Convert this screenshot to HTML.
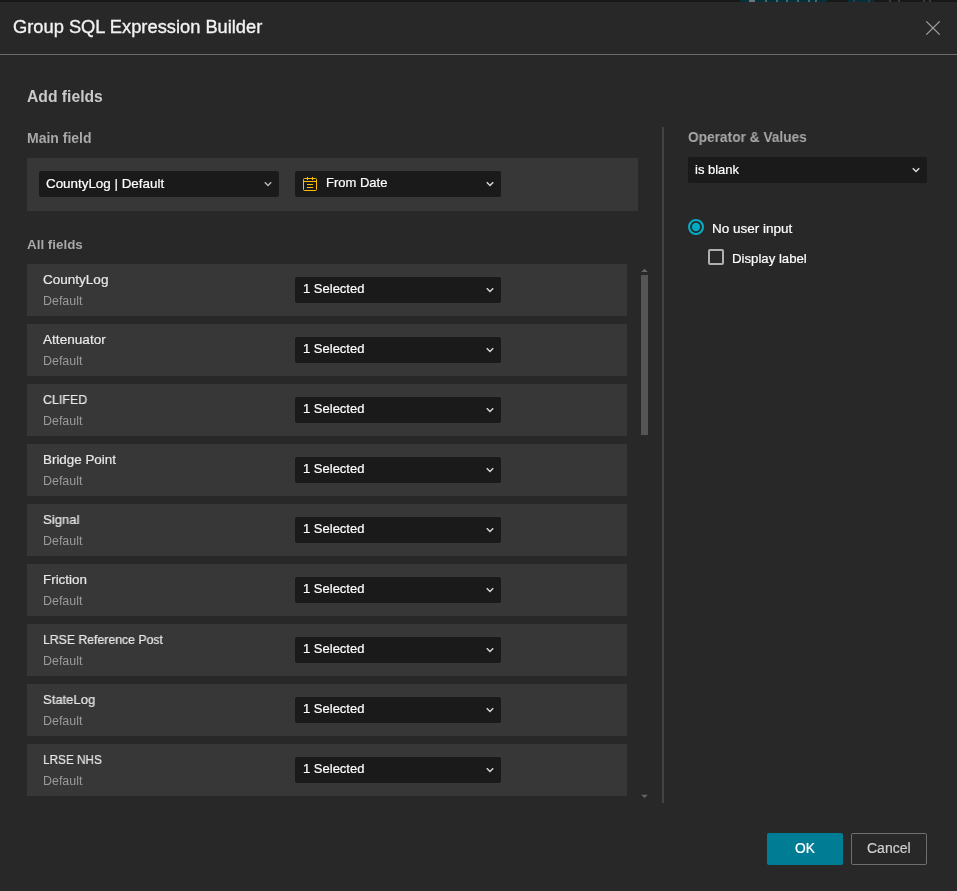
<!DOCTYPE html>
<html><head><meta charset="utf-8"><style>
html,body{margin:0;padding:0;}
body{width:957px;height:891px;background:#282828;position:relative;overflow:hidden;font-family:"Liberation Sans", sans-serif;}
body>div,body>svg{position:absolute;}
.t{white-space:nowrap;will-change:transform;}
.w{-webkit-text-stroke:0.2px currentColor;}
</style></head><body>
<div style="left:0px;top:0px;width:957px;height:2px;background:#181818;"></div>
<div style="left:740px;top:0px;width:87px;height:2px;background:#05303a;"></div>
<div style="left:848px;top:0px;width:26px;height:2px;background:#05303a;"></div>
<div style="left:749px;top:0px;width:6px;height:2px;background:#6a7a7c;"></div>
<div style="left:765px;top:0px;width:2px;height:2px;background:#4d6669;"></div>
<div style="left:776px;top:0px;width:2px;height:2px;background:#4d6669;"></div>
<div style="left:786px;top:0px;width:2px;height:2px;background:#4d6669;"></div>
<div style="left:797px;top:0px;width:2px;height:2px;background:#4d6669;"></div>
<div style="left:808px;top:0px;width:2px;height:2px;background:#4d6669;"></div>
<div style="left:815px;top:0px;width:2px;height:2px;background:#4d6669;"></div>
<div style="left:853px;top:0px;width:2px;height:2px;background:#3a3a3a;"></div>
<div style="left:868px;top:0px;width:2px;height:2px;background:#3a3a3a;"></div>
<div style="left:889px;top:0px;width:2px;height:2px;background:#3a3a3a;"></div>
<div style="left:898px;top:0px;width:2px;height:2px;background:#3a3a3a;"></div>
<div style="left:923px;top:0px;width:2px;height:2px;background:#3a3a3a;"></div>
<div style="left:929px;top:0px;width:2px;height:2px;background:#3a3a3a;"></div>
<div class="t" style="left:13px;top:17.51px;font-size:18.3px;line-height:18.3px;color:#f2f2f2;font-weight:400;-webkit-text-stroke:0.35px #f2f2f2">Group SQL Expression Builder</div>
<svg style="left:924px;top:19px" width="18" height="18" viewBox="0 0 18 18"><path d="M2.3 2.3 L15.7 15.7 M15.7 2.3 L2.3 15.7" stroke="#a6a6a6" stroke-width="1.2" fill="none"/></svg>
<div style="left:0px;top:54px;width:957px;height:1px;background:#6b6b6b;"></div>
<div class="t" style="left:27px;top:89.01px;font-size:15.7px;line-height:15.7px;color:#c8c8c8;font-weight:700;">Add fields</div>
<div class="t" style="left:27px;top:130.65px;font-size:14px;line-height:14px;color:#a8a8a8;font-weight:700;">Main field</div>
<div style="left:27px;top:158px;width:611px;height:53px;background:#373737;"></div>
<div style="left:39px;top:171px;width:240px;height:26px;background:#1a1a1a;border-radius:2px"></div>
<div class="t w" style="left:46px;top:176.86px;font-size:13.4px;line-height:13.4px;color:#ffffff;font-weight:400;">CountyLog | Default</div>
<svg style="left:263px;top:179px" width="10" height="10" viewBox="0 0 10 10"><polyline points="1.8,3.3 5,6.5 8.2,3.3" fill="none" stroke="#b8b8b8" stroke-width="1.5"/></svg>
<div style="left:295px;top:171px;width:206px;height:26px;background:#1a1a1a;border-radius:2px"></div>
<svg style="left:302px;top:176px" width="16" height="16" viewBox="0 0 16 16" fill="none" stroke="#ffbf00" stroke-width="1"><rect x="1.5" y="2.5" width="13" height="12" rx="1"/><line x1="1.5" y1="5.5" x2="14.5" y2="5.5"/><line x1="5.5" y1="1" x2="5.5" y2="4"/><line x1="10.5" y1="1" x2="10.5" y2="4"/><line x1="5" y1="8.5" x2="11" y2="8.5"/><line x1="5" y1="11.5" x2="11" y2="11.5"/></svg>
<div class="t w" style="left:325.6px;top:176.20px;font-size:13px;line-height:13px;color:#ffffff;font-weight:400;">From Date</div>
<svg style="left:485px;top:179px" width="10" height="10" viewBox="0 0 10 10"><polyline points="1.8,3.3 5,6.5 8.2,3.3" fill="none" stroke="#d8d8d8" stroke-width="1.5"/></svg>
<div class="t" style="left:27px;top:237.66px;font-size:13.4px;line-height:13.4px;color:#a8a8a8;font-weight:700;">All fields</div>
<div style="left:27px;top:264px;width:600px;height:52px;background:#373737;"></div>
<div class="t w" style="left:43px;top:272.96px;font-size:13.4px;line-height:13.4px;color:#e8e8e8;font-weight:400;transform:scaleX(1.01);transform-origin:0 0;">CountyLog</div>
<div class="t" style="left:42.6px;top:295.06px;font-size:12.45px;line-height:12.45px;color:#9a9a9a;font-weight:400;">Default</div>
<div style="left:295px;top:277px;width:206px;height:26px;background:#1a1a1a;border-radius:2px"></div>
<div class="t w" style="left:302.6px;top:282.20px;font-size:13px;line-height:13px;color:#ffffff;font-weight:400;">1 Selected</div>
<svg style="left:485px;top:284.5px" width="10" height="10" viewBox="0 0 10 10"><polyline points="1.8,3.3 5,6.5 8.2,3.3" fill="none" stroke="#d8d8d8" stroke-width="1.5"/></svg>
<div style="left:27px;top:324px;width:600px;height:52px;background:#373737;"></div>
<div class="t w" style="left:43px;top:332.96px;font-size:13.4px;line-height:13.4px;color:#e8e8e8;font-weight:400;transform:scaleX(1.016);transform-origin:0 0;">Attenuator</div>
<div class="t" style="left:42.6px;top:355.06px;font-size:12.45px;line-height:12.45px;color:#9a9a9a;font-weight:400;">Default</div>
<div style="left:295px;top:337px;width:206px;height:26px;background:#1a1a1a;border-radius:2px"></div>
<div class="t w" style="left:302.6px;top:342.20px;font-size:13px;line-height:13px;color:#ffffff;font-weight:400;">1 Selected</div>
<svg style="left:485px;top:344.5px" width="10" height="10" viewBox="0 0 10 10"><polyline points="1.8,3.3 5,6.5 8.2,3.3" fill="none" stroke="#d8d8d8" stroke-width="1.5"/></svg>
<div style="left:27px;top:384px;width:600px;height:52px;background:#373737;"></div>
<div class="t w" style="left:43px;top:392.96px;font-size:13.4px;line-height:13.4px;color:#e8e8e8;font-weight:400;transform:scaleX(0.928);transform-origin:0 0;">CLIFED</div>
<div class="t" style="left:42.6px;top:415.06px;font-size:12.45px;line-height:12.45px;color:#9a9a9a;font-weight:400;">Default</div>
<div style="left:295px;top:397px;width:206px;height:26px;background:#1a1a1a;border-radius:2px"></div>
<div class="t w" style="left:302.6px;top:402.20px;font-size:13px;line-height:13px;color:#ffffff;font-weight:400;">1 Selected</div>
<svg style="left:485px;top:404.5px" width="10" height="10" viewBox="0 0 10 10"><polyline points="1.8,3.3 5,6.5 8.2,3.3" fill="none" stroke="#d8d8d8" stroke-width="1.5"/></svg>
<div style="left:27px;top:444px;width:600px;height:52px;background:#373737;"></div>
<div class="t w" style="left:43px;top:452.96px;font-size:13.4px;line-height:13.4px;color:#e8e8e8;font-weight:400;transform:scaleX(1.0);transform-origin:0 0;">Bridge Point</div>
<div class="t" style="left:42.6px;top:475.06px;font-size:12.45px;line-height:12.45px;color:#9a9a9a;font-weight:400;">Default</div>
<div style="left:295px;top:457px;width:206px;height:26px;background:#1a1a1a;border-radius:2px"></div>
<div class="t w" style="left:302.6px;top:462.20px;font-size:13px;line-height:13px;color:#ffffff;font-weight:400;">1 Selected</div>
<svg style="left:485px;top:464.5px" width="10" height="10" viewBox="0 0 10 10"><polyline points="1.8,3.3 5,6.5 8.2,3.3" fill="none" stroke="#d8d8d8" stroke-width="1.5"/></svg>
<div style="left:27px;top:504px;width:600px;height:52px;background:#373737;"></div>
<div class="t w" style="left:43px;top:512.96px;font-size:13.4px;line-height:13.4px;color:#e8e8e8;font-weight:400;transform:scaleX(0.98);transform-origin:0 0;">Signal</div>
<div class="t" style="left:42.6px;top:535.06px;font-size:12.45px;line-height:12.45px;color:#9a9a9a;font-weight:400;">Default</div>
<div style="left:295px;top:517px;width:206px;height:26px;background:#1a1a1a;border-radius:2px"></div>
<div class="t w" style="left:302.6px;top:522.20px;font-size:13px;line-height:13px;color:#ffffff;font-weight:400;">1 Selected</div>
<svg style="left:485px;top:524.5px" width="10" height="10" viewBox="0 0 10 10"><polyline points="1.8,3.3 5,6.5 8.2,3.3" fill="none" stroke="#d8d8d8" stroke-width="1.5"/></svg>
<div style="left:27px;top:564px;width:600px;height:52px;background:#373737;"></div>
<div class="t w" style="left:43px;top:572.96px;font-size:13.4px;line-height:13.4px;color:#e8e8e8;font-weight:400;transform:scaleX(0.99);transform-origin:0 0;">Friction</div>
<div class="t" style="left:42.6px;top:595.06px;font-size:12.45px;line-height:12.45px;color:#9a9a9a;font-weight:400;">Default</div>
<div style="left:295px;top:577px;width:206px;height:26px;background:#1a1a1a;border-radius:2px"></div>
<div class="t w" style="left:302.6px;top:582.20px;font-size:13px;line-height:13px;color:#ffffff;font-weight:400;">1 Selected</div>
<svg style="left:485px;top:584.5px" width="10" height="10" viewBox="0 0 10 10"><polyline points="1.8,3.3 5,6.5 8.2,3.3" fill="none" stroke="#d8d8d8" stroke-width="1.5"/></svg>
<div style="left:27px;top:624px;width:600px;height:52px;background:#373737;"></div>
<div class="t w" style="left:43px;top:632.96px;font-size:13.4px;line-height:13.4px;color:#e8e8e8;font-weight:400;transform:scaleX(0.915);transform-origin:0 0;">LRSE Reference Post</div>
<div class="t" style="left:42.6px;top:655.06px;font-size:12.45px;line-height:12.45px;color:#9a9a9a;font-weight:400;">Default</div>
<div style="left:295px;top:637px;width:206px;height:26px;background:#1a1a1a;border-radius:2px"></div>
<div class="t w" style="left:302.6px;top:642.20px;font-size:13px;line-height:13px;color:#ffffff;font-weight:400;">1 Selected</div>
<svg style="left:485px;top:644.5px" width="10" height="10" viewBox="0 0 10 10"><polyline points="1.8,3.3 5,6.5 8.2,3.3" fill="none" stroke="#d8d8d8" stroke-width="1.5"/></svg>
<div style="left:27px;top:684px;width:600px;height:52px;background:#373737;"></div>
<div class="t w" style="left:43px;top:692.96px;font-size:13.4px;line-height:13.4px;color:#e8e8e8;font-weight:400;transform:scaleX(0.974);transform-origin:0 0;">StateLog</div>
<div class="t" style="left:42.6px;top:715.06px;font-size:12.45px;line-height:12.45px;color:#9a9a9a;font-weight:400;">Default</div>
<div style="left:295px;top:697px;width:206px;height:26px;background:#1a1a1a;border-radius:2px"></div>
<div class="t w" style="left:302.6px;top:702.20px;font-size:13px;line-height:13px;color:#ffffff;font-weight:400;">1 Selected</div>
<svg style="left:485px;top:704.5px" width="10" height="10" viewBox="0 0 10 10"><polyline points="1.8,3.3 5,6.5 8.2,3.3" fill="none" stroke="#d8d8d8" stroke-width="1.5"/></svg>
<div style="left:27px;top:744px;width:600px;height:52px;background:#373737;"></div>
<div class="t w" style="left:43px;top:752.96px;font-size:13.4px;line-height:13.4px;color:#e8e8e8;font-weight:400;transform:scaleX(0.88);transform-origin:0 0;">LRSE NHS</div>
<div class="t" style="left:42.6px;top:775.06px;font-size:12.45px;line-height:12.45px;color:#9a9a9a;font-weight:400;">Default</div>
<div style="left:295px;top:757px;width:206px;height:26px;background:#1a1a1a;border-radius:2px"></div>
<div class="t w" style="left:302.6px;top:762.20px;font-size:13px;line-height:13px;color:#ffffff;font-weight:400;">1 Selected</div>
<svg style="left:485px;top:764.5px" width="10" height="10" viewBox="0 0 10 10"><polyline points="1.8,3.3 5,6.5 8.2,3.3" fill="none" stroke="#d8d8d8" stroke-width="1.5"/></svg>
<svg style="left:640px;top:267px" width="10" height="7" viewBox="0 0 10 7"><polygon points="1.2,5 4.5,1.8 7.8,5" fill="#666666"/></svg>
<div style="left:641px;top:275px;width:7px;height:160px;background:#555555;"></div>
<svg style="left:640px;top:793px" width="10" height="7" viewBox="0 0 10 7"><polygon points="1.2,1.8 4.5,5 7.8,1.8" fill="#666666"/></svg>
<div style="left:662px;top:127px;width:2px;height:676px;background:#444444;"></div>
<div class="t" style="left:688px;top:129.81px;font-size:14.4px;line-height:14.4px;color:#a8a8a8;font-weight:700;transform:scaleX(0.952);transform-origin:0 0;">Operator &amp; Values</div>
<div style="left:688px;top:157px;width:239px;height:26px;background:#1a1a1a;border-radius:2px"></div>
<div class="t w" style="left:695px;top:163.20px;font-size:13px;line-height:13px;color:#ffffff;font-weight:400;">is blank</div>
<svg style="left:911px;top:165px" width="10" height="10" viewBox="0 0 10 10"><polyline points="1.8,3.3 5,6.5 8.2,3.3" fill="none" stroke="#d8d8d8" stroke-width="1.5"/></svg>
<svg style="left:686px;top:217px" width="20" height="20" viewBox="0 0 20 20"><circle cx="10" cy="10" r="6.95" fill="none" stroke="#04adc3" stroke-width="2.1"/><circle cx="10" cy="10" r="4.15" fill="#03a9bf"/></svg>
<div class="t w" style="left:711.9px;top:221.67px;font-size:13.5px;line-height:13.5px;color:#ffffff;font-weight:400;">No user input</div>
<div style="left:708px;top:249px;width:16px;height:16px;background:transparent;box-sizing:border-box;border:2px solid #b0b0b0;border-radius:2px"></div>
<div class="t w" style="left:731.9px;top:252.43px;font-size:13.2px;line-height:13.2px;color:#ffffff;font-weight:400;">Display label</div>
<div style="left:767px;top:833px;width:76px;height:32px;background:#007d94;border-radius:2px"></div>
<div class="t w" style="left:795px;top:841.52px;font-size:13.8px;line-height:13.8px;color:#ffffff;font-weight:400;">OK</div>
<div style="left:851px;top:833px;width:76px;height:32px;background:transparent;box-sizing:border-box;border:1px solid #6e6e6e;border-radius:2px"></div>
<div class="t w" style="left:867.2px;top:841.35px;font-size:14px;line-height:14px;color:#cfcfcf;font-weight:400;">Cancel</div>
</body></html>
